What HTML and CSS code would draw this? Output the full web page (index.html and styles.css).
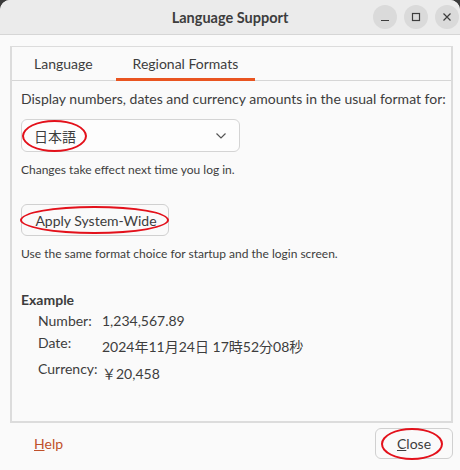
FILE: index.html
```html
<!DOCTYPE html>
<html lang="en">
<head>
  <meta charset="UTF-8">
  <title>Language Support</title>
  <link rel="stylesheet" href="styles.css">
</head>
<body>
  <div class="window">
    <div class="titlebar">
      <div class="title">Language Support</div>
      <div class="controls">
        <button class="ctl"><svg width="10" height="10" viewBox="0 0 10 10"><path d="M1 8.5h8" stroke="#3d3d3d" stroke-width="1.2"/></svg></button>
        <button class="ctl"><svg width="10" height="10" viewBox="0 0 10 10"><rect x="1.5" y="1.5" width="7" height="7" fill="none" stroke="#3d3d3d" stroke-width="1.2"/></svg></button>
        <button class="ctl"><svg width="10" height="10" viewBox="0 0 10 10"><path d="M1.5 1.5l7 7M8.5 1.5l-7 7" stroke="#3d3d3d" stroke-width="1.2"/></svg></button>
      </div>
    </div>

    <div class="content">
      <div class="notebook">
        <div class="tabs">
          <div class="tab">Language</div>
          <div class="tab active">Regional Formats</div>
        </div>
        <div class="page">
          <div class="lead">Display numbers, dates and currency amounts in the usual format for:</div>
          <div class="combo">
            <span class="mark">日本語<span class="ring"></span></span>
            <svg class="chev" width="12" height="8" viewBox="0 0 12 8"><path d="M1.5 1.5l4.5 4.5 4.5-4.5" fill="none" stroke="#555" stroke-width="1.2"/></svg>
          </div>
          <div class="hint">Changes take effect next time you log in.</div>

          <button class="btn apply"><span class="mark">Apply System-Wide<span class="ring wide"></span></span></button>
          <div class="hint second">Use the same format choice for startup and the login screen.</div>

          <div class="example">
            <div class="ex-title">Example</div>
            <div class="ex-grid">
              <div class="lbl">Number:</div><div class="val">1,234,567.89</div>
              <div class="lbl">Date:</div><div class="val date">2024年11月24日 17時52分08秒</div>
              <div class="lbl">Currency:</div><div class="val money">￥20,458</div>
            </div>
          </div>
        </div>
      </div>

      <div class="actions">
        <a class="help"><u>H</u>elp</a>
        <button class="btn close"><span class="mark"><u>C</u>lose<span class="ring close-ring"></span></span></button>
      </div>
    </div>
  </div>
</body>
</html>
```

FILE: styles.css
```css
/* General */
body {
  margin: 0;
  background: #3a3a3a;
  font-family: Lato, "Noto Sans CJK JP", sans-serif;
  color: #3d3d3d;
}

.window {
  width: 460px;
  height: 470px;
  background: #fafafa;
  border-radius: 10px 10px 0 0;
  overflow: hidden;
}

/* Title bar */
.titlebar {
  height: 34px;
  background: #ebebeb;
  border-bottom: 1px solid #d6d6d6;
  position: relative;
  display: flex;
  align-items: center;
  justify-content: center;
}

.title {
  font-weight: bold;
  font-size: 14.5px;
}

.controls {
  position: absolute;
  right: 1px;
  top: 5px;
  display: flex;
  gap: 7px;
}

.ctl {
  width: 24px;
  height: 24px;
  border: none;
  border-radius: 50%;
  background: #dadada;
  padding: 0;
  display: flex;
  align-items: center;
  justify-content: center;
}

/* Content */
.content {
  padding: 11px 7px 0 10px;
}

.notebook {
  border: 2px solid #dcdcdc;
  border-top-width: 1px;
  height: 374px;
  background: #fafafa;
}

.tabs {
  display: flex;
  height: 33px;
  border-bottom: 1px solid #d6d6d6;
  padding-left: 5px;
}

.tab {
  font-size: 14px;
  padding: 0 17px;
  display: flex;
  align-items: center;
}

.tab.active {
  border-bottom: 3px solid #e95420;
  margin-bottom: -1px;
  margin-left: 6px;
  padding-top: 1px;
}

.page {
  padding: 9px 9px 0 9px;
}

.lead {
  font-size: 14px;
  white-space: nowrap;
}

.combo {
  margin-top: 12px;
  border: 1px solid #d4d4d4;
  border-radius: 6px;
  background: #fdfdfd;
  display: flex;
  align-items: center;
  justify-content: space-between;
  padding: 0 12px;
  box-sizing: border-box;
  width: 219px;
  height: 33px;
  font-size: 14px;
}

.hint {
  font-size: 12px;
  margin-top: 10px;
}

.hint.second {
  margin-top: 10px;
}

.btn {
  font-family: inherit;
  font-size: 14px;
  color: #3d3d3d;
  background: #fafafa;
  border: 1px solid #d0d0d0;
  border-radius: 6px;
  padding: 0;
}

.apply {
  margin-top: 27px;
  width: 148px;
  height: 32px;
  display: block;
  padding-left: 2px;
}

/* Red annotations */
.mark {
  position: relative;
  display: inline-block;
}

.ring {
  position: absolute;
  left: -12px;
  right: -11px;
  top: -6px;
  bottom: -6px;
  border: 2px solid #e3111b;
  border-radius: 50%;
}

.ring.wide {
  left: -15px;
  right: -12px;
  top: -6px;
  bottom: -5px;
}

.ring.close-ring {
  left: -16px;
  right: -12px;
  top: -7px;
  bottom: -8px;
}

/* Example */
.example {
  margin-top: 30px;
}

.ex-title {
  font-weight: bold;
  font-size: 14px;
}

.ex-grid {
  display: grid;
  grid-template-columns: 64px auto;
  grid-template-rows: 22px 26px auto;
  margin-top: 4px;
  padding-left: 17px;
  font-size: 14px;
  line-height: 18px;
}

.val.date {
  margin-top: 4px;
}

.val.money {
  margin-top: 5px;
}

/* Bottom actions */
.actions {
  display: flex;
  justify-content: space-between;
  align-items: center;
  padding: 5px 0 0 24px;
}

.help {
  font-size: 14px;
  color: #c0502a;
  text-decoration: none;
}

.close {
  width: 78px;
  height: 31px;
}
```
